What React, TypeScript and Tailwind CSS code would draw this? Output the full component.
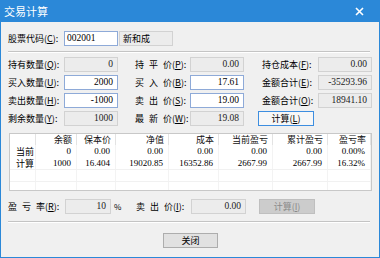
const COLS = 'grid grid-cols-[26px_41px_39px_53px_50px_54px_55px_43px]'
const HEAD = ['', '余额', '保本价', '净值', '成本', '当前盈亏', '累计盈亏', '盈亏率']
const ROWS = [
  ['当前', '0', '0.00', '0.00', '0.00', '0.00', '0.00', '0.00%'],
  ['计算', '1000', '16.404', '19020.85', '16352.86', '2667.99', '2667.99', '16.32%'],
]

const Lbl = ({ text, k, spaced, w = 'w-[56px]' }: { text: string; k: string; spaced?: boolean; w?: string }) => (
  <div className={`${w} flex items-center h-[15px] text-[9px] leading-none whitespace-nowrap text-black`}>
    {spaced ? (
      <span className="flex justify-between w-[37px]">
        {text.split('').map((c, i) => <span key={i}>{c}</span>)}
      </span>
    ) : (
      <span>{text}</span>
    )}
    <span>(<u>{k}</u>):</span>
  </div>
)

const Box = ({ v, edit, w = 'w-[54px]' }: { v: string; edit?: boolean; w?: string }) => (
  <div
    className={`${w} h-[15px] border flex items-center justify-end pr-[4px] text-[9.5px] leading-none font-['Liberation_Serif',serif] ${
      edit ? 'bg-white border-[#8eaad8] text-black' : 'bg-[#ececec] border-[#d2d2d2] text-[#222]'
    }`}
  >
    {v}
  </div>
)

const Sep = () => (
  <div className="w-[362px] h-[2px] border-t border-t-[#c4c4c4] border-b border-b-white" />
)

export default function App() {
  return (
    <div className="w-[380px] h-[258px] flex flex-col border-x border-b border-[#2b88d8] bg-[#f0f0f0] font-['Noto_Sans_CJK_SC',sans-serif] select-none">
      {/* title bar */}
      <div className="h-[22px] shrink-0 bg-[#2b88d8] flex items-center justify-between pl-[4px] pr-[16px] -mx-px">
        <span className="text-white text-[11px] leading-none">交易计算</span>
        <svg width="9" height="9" viewBox="0 0 9 9">
          <path d="M1 1 L8 8 M8 1 L1 8" stroke="white" strokeWidth="1.6" />
        </svg>
      </div>

      <div className="flex flex-col pl-[7px] pt-[9px]">
        {/* stock code */}
        <div className="flex items-center">
          <Lbl text="股票代码" k="C" />
          <div className="w-[54px] h-[15px] bg-white border border-[#8eaad8] flex items-center pl-[2px] text-[9.5px] leading-none font-['Liberation_Serif',serif]">
            002001
          </div>
          <div className="w-[54px] h-[15px] ml-px bg-[#ececec] border border-[#d2d2d2] flex items-center pl-[3px] text-[9px] leading-none">
            新和成
          </div>
        </div>

        <div className="mt-[5px]">
          <Sep />
        </div>

        {/* field grid */}
        <div className="flex flex-col gap-[3px] mt-[4px]">
          <div className="flex items-center">
            <Lbl text="持有数量" k="Q" />
            <Box v="0" />
            <div className="w-[17px]" />
            <Lbl text="持平价" k="P" spaced w="w-[55px]" />
            <Box v="0.00" />
            <div className="w-[18px]" />
            <Lbl text="持仓成本" k="F" />
            <Box v="0.00" />
          </div>
          <div className="flex items-center">
            <Lbl text="买入数量" k="U" />
            <Box v="2000" edit />
            <div className="w-[17px]" />
            <Lbl text="买入价" k="B" spaced w="w-[55px]" />
            <Box v="17.61" edit />
            <div className="w-[18px]" />
            <Lbl text="金额合计" k="E" />
            <Box v="-35293.96" />
          </div>
          <div className="flex items-center">
            <Lbl text="卖出数量" k="H" />
            <Box v="-1000" edit />
            <div className="w-[17px]" />
            <Lbl text="卖出价" k="S" spaced w="w-[55px]" />
            <Box v="19.00" edit />
            <div className="w-[18px]" />
            <Lbl text="金额合计" k="O" />
            <Box v="18941.10" />
          </div>
          <div className="flex items-center">
            <Lbl text="剩余数量" k="Y" />
            <Box v="1000" />
            <div className="w-[17px]" />
            <Lbl text="最新价" k="W" spaced w="w-[55px]" />
            <Box v="19.08" />
            <div className="w-[14px]" />
            <button className="w-[56px] h-[15px] bg-[#f7f7f7] border border-[#3d8ee0] text-[9px] leading-none flex items-center justify-center">
              计算(<u>L</u>)
            </button>
          </div>
        </div>

        {/* table */}
        <div className="mt-[7px] ml-px w-[363px] h-[58px] bg-white border border-[#c8c8c8] overflow-hidden">
          <div className={`${COLS} h-[11px]`}>
            {HEAD.map((h, i) => (
              <div key={i} className="flex items-center justify-end pr-[4px] text-[9px] leading-none border-r border-[#e3e3e3] text-[#111]">
                {h}
              </div>
            ))}
          </div>
          {ROWS.map((r, ri) => (
            <div key={ri} className={`${COLS} h-[12px]`}>
              {r.map((c, i) =>
                i === 0 ? (
                  <div key={i} className="flex items-center pl-[6px] text-[9px] leading-none border-r border-[#f3f3f3]">
                    {c}
                  </div>
                ) : (
                  <div key={i} className="flex items-center justify-end pr-[5px] text-[9px] leading-none font-['Liberation_Serif',serif] border-r border-[#f3f3f3]">
                    {c}
                  </div>
                )
              )}
            </div>
          ))}
          {[0, 1].map((ri) => (
            <div key={ri} className={`${COLS} h-[12px] border-t border-[#f1f1f1]`}>
              {HEAD.map((_, i) => (
                <div key={i} className="border-r border-[#f3f3f3]" />
              ))}
            </div>
          ))}
        </div>

        {/* profit rate row */}
        <div className="flex items-center mt-[8px]">
          <Lbl text="盈亏率" k="R" spaced w="w-[57px]" />
          <Box v="10" w="w-[46px]" />
          <span className="w-[25px] pl-[3px] text-[8px] leading-none">%</span>
          <Lbl text="卖出价" k="I" spaced w="w-[55px]" />
          <Box v="0.00" w="w-[55px]" />
          <div className="w-[13px]" />
          <button className="w-[56px] h-[15px] bg-[#cccccc] border border-[#bfbfbf] text-[9px] leading-none text-[#8a8a8a] flex items-center justify-center">
            计算(<u>I</u>)
          </button>
        </div>

        <div className="mt-[7px]">
          <Sep />
        </div>

        <div className="flex pl-[155px] mt-[10px]">
          <button className="w-[55px] h-[15px] bg-[#e1e1e1] border border-[#adadad] text-[9px] leading-none flex items-center justify-center">
            关闭
          </button>
        </div>
      </div>
    </div>
  )
}
